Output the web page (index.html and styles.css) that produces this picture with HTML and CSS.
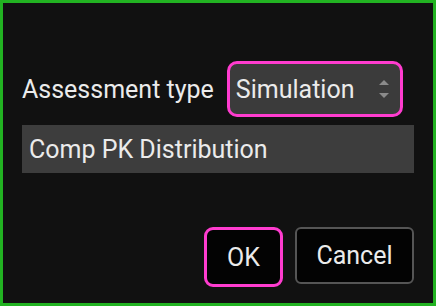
FILE: index.html
```html
<!DOCTYPE html>
<html>
<head lang="en">
    <meta charset="UTF-8">
    <title>Assessment</title>
    <link rel="stylesheet" href="styles.css">
</head>
<body>
<section class="dialog">
    <div class="row">
        <label class="label">Assessment type</label>
        <div class="select">
            <span>Simulation</span>
            <svg class="arrows" width="10" height="20" viewBox="0 0 10 20">
                <path d="M5 1 L10 6 L0 6 Z" fill="#8a8a8a"/>
                <path d="M5 19 L10 14 L0 14 Z" fill="#8a8a8a"/>
            </svg>
        </div>
    </div>
    <div class="name">Comp PK Distribution</div>
    <div class="buttons">
        <button class="btn ok">OK</button>
        <button class="btn cancel">Cancel</button>
    </div>
</section>
</body>
</html>
```

FILE: styles.css
```css
html, body{
    margin: 0;
    padding: 0;
    background: #111;
    font-family: Roboto, "Liberation Sans", sans-serif;
}

.dialog{
    width: 436px;
    height: 306px;
    box-sizing: border-box;
    border: 3px solid #22b322;
    background: #111;
    padding: 58px 19px 0 19px;
    color: #ebebeb;
    font-size: 25px;
}

.row{
    display: flex;
    align-items: center;
    gap: 13px;
}

.select{
    width: 176px;
    height: 56px;
    box-sizing: border-box;
    border: 3px solid #ff3ccf;
    border-radius: 10px;
    background: #3b3b3b;
    padding: 0 11px 0 6px;
    display: flex;
    align-items: center;
    justify-content: space-between;
}

.arrows{
    display: block;
}

.name{
    margin-top: 8px;
    height: 48px;
    background: #3d3d3d;
    display: flex;
    align-items: center;
    padding-left: 7px;
}

.buttons{
    margin-top: 54px;
    display: flex;
    justify-content: flex-end;
    align-items: flex-start;
    gap: 12px;
}

.btn{
    font-family: Roboto, "Liberation Sans", sans-serif;
    font-size: 25px;
    color: #ebebeb;
    background: #030303;
    box-sizing: border-box;
    padding: 0;
}

.ok{
    width: 79px;
    height: 60px;
    border: 3px solid #ff3ccf;
    border-radius: 9px;
}

.cancel{
    width: 119px;
    height: 57px;
    border: 2px solid #555;
    border-radius: 6px;
}
```
